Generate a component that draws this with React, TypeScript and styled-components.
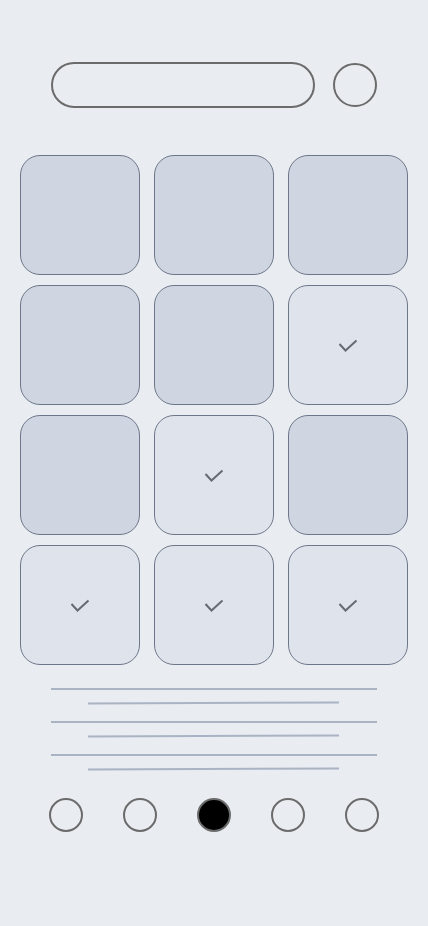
import React from "react";
import styled, { createGlobalStyle } from "styled-components";

const Global = createGlobalStyle`
  html, body { margin: 0; padding: 0; background: #e9edf1; }
  body { font-family: "Liberation Sans", Arial, sans-serif; }
`;

const Page = styled.div`
  width: 428px;
  min-height: 926px;
  background: #e9edf1;
  display: flex;
  flex-direction: column;
  align-items: center;
  padding-top: 62px;
  box-sizing: border-box;
`;

const Header = styled.div`
  display: flex;
  align-items: center;
  gap: 18px;
`;

const SearchBar = styled.div`
  width: 264px;
  height: 46px;
  box-sizing: border-box;
  border: 2px solid #6b6b6b;
  border-radius: 23px;
`;

const RoundButton = styled.div`
  width: 44px;
  height: 44px;
  box-sizing: border-box;
  border: 2px solid #6b6b6b;
  border-radius: 50%;
`;

const Grid = styled.div`
  margin-top: 47px;
  display: grid;
  grid-template-columns: repeat(3, 120px);
  grid-auto-rows: 120px;
  column-gap: 14px;
  row-gap: 10px;
`;

const Tile = styled.div<{ $selected: boolean }>`
  box-sizing: border-box;
  border: 1px solid #6e7789;
  border-radius: 20px;
  background: ${(p) => (p.$selected ? "#dfe4ec" : "#cfd6e1")};
  display: flex;
  align-items: center;
  justify-content: center;
  padding-top: 1px;
`;

const Lines = styled.div`
  margin-top: 23px;
  display: flex;
  flex-direction: column;
  align-items: center;
  gap: 17px;
  margin-left: -1px;
`;

const LinePair = styled.div`
  display: flex;
  flex-direction: column;
  align-items: center;
  gap: 12px;
`;

const Line = styled.div<{ $short?: boolean }>`
  height: 2px;
  width: ${(p) => (p.$short ? "251px" : "326px")};
  background: #a9b3c3;
  transform: ${(p) => (p.$short ? "rotate(-0.23deg)" : "none")};
`;

const Dots = styled.div`
  margin-top: 28px;
  display: flex;
  gap: 40px;
`;

const Dot = styled.div<{ $active?: boolean }>`
  width: 34px;
  height: 34px;
  box-sizing: border-box;
  border-radius: 50%;
  border: 2px solid #6b6b6b;
  background: ${(p) => (p.$active ? "#000" : "transparent")};
`;

const Check = () => (
  <svg width="20" height="14" viewBox="0 0 20 14" fill="none">
    <path d="M1.5 5 L7.5 11.5 L18.5 1.5" stroke="#666b73" strokeWidth="2" />
  </svg>
);

const states = [false, false, false, false, false, true, false, true, false, true, true, true];

export default function App() {
  return (
    <>
      <Global />
      <Page>
        <Header>
          <SearchBar />
          <RoundButton />
        </Header>
        <Grid>
          {states.map((s, i) => (
            <Tile key={i} $selected={s}>
              {s && <Check />}
            </Tile>
          ))}
        </Grid>
        <Lines>
          {[0, 1, 2].map((i) => (
            <LinePair key={i}>
              <Line />
              <Line $short />
            </LinePair>
          ))}
        </Lines>
        <Dots>
          {[0, 1, 2, 3, 4].map((i) => (
            <Dot key={i} $active={i === 2} />
          ))}
        </Dots>
      </Page>
    </>
  );
}
